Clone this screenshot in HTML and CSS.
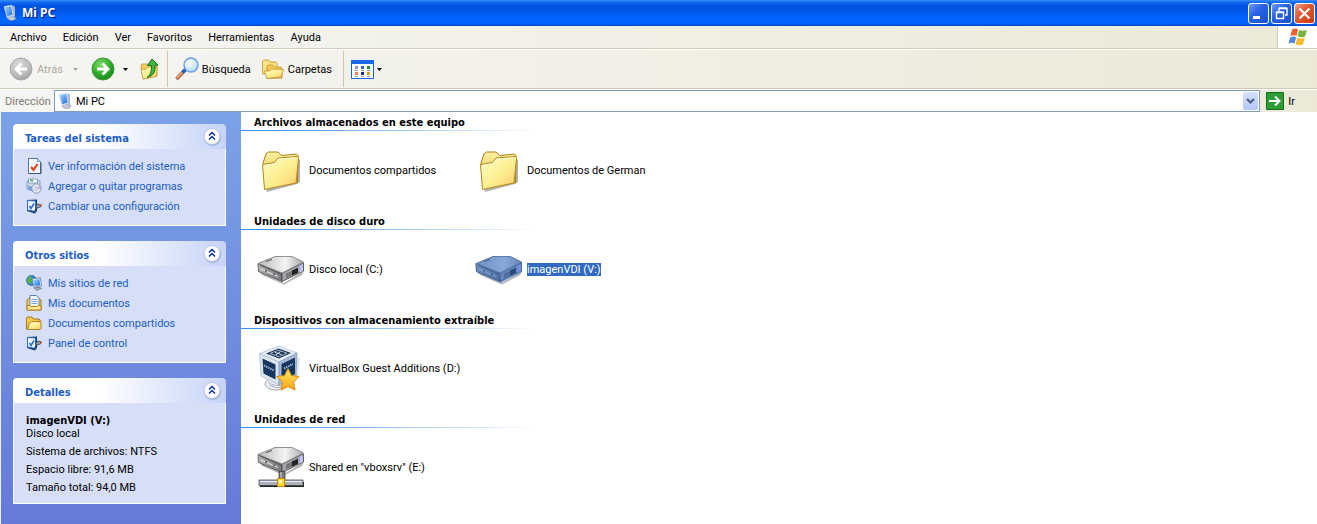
FILE: index.html
```html
<!DOCTYPE html>
<html lang="es">
<head>
<meta charset="utf-8">
<title>Mi PC</title>
<link rel="stylesheet" href="styles.css">
</head>
<body>
<svg class="defs" width="0" height="0" aria-hidden="true">
  <defs>
    <linearGradient id="gFolder" x1="0" y1="0" x2="1" y2="1"><stop offset="0" stop-color="#fffcc0"/><stop offset=".55" stop-color="#fdee90"/><stop offset="1" stop-color="#fbc868"/></linearGradient>
    <linearGradient id="gFolderBack" x1="0" y1="0" x2="0" y2="1"><stop offset="0" stop-color="#fdf3a0"/><stop offset="1" stop-color="#dcae3c"/></linearGradient>
    <linearGradient id="gMetal" x1="0" y1="0" x2="1" y2="0"><stop offset="0" stop-color="#b9b9bb"/><stop offset=".6" stop-color="#f4f4f4"/><stop offset="1" stop-color="#a9a9ad"/></linearGradient>
    <linearGradient id="gSide" x1="0" y1="0" x2="1" y2="0"><stop offset="0" stop-color="#b4b4b6"/><stop offset="1" stop-color="#77777b"/></linearGradient>
    <linearGradient id="gStar" x1="0" y1="0" x2="0" y2="1"><stop offset="0" stop-color="#ffe860"/><stop offset="1" stop-color="#f9a51c"/></linearGradient>
    <radialGradient id="gGreen" cx=".4" cy=".3" r=".8"><stop offset="0" stop-color="#7fdc6c"/><stop offset=".5" stop-color="#36b030"/><stop offset="1" stop-color="#0f7a14"/></radialGradient>
    <radialGradient id="gGray" cx=".4" cy=".3" r=".8"><stop offset="0" stop-color="#dcdcdc"/><stop offset=".6" stop-color="#bcbcbc"/><stop offset="1" stop-color="#999"/></radialGradient>
    <radialGradient id="gLens" cx=".4" cy=".35" r=".7"><stop offset="0" stop-color="#fff"/><stop offset="1" stop-color="#a9d8fb"/></radialGradient>
    <linearGradient id="gScreen" x1="0" y1="0" x2="1" y2="1"><stop offset="0" stop-color="#9fd4ff"/><stop offset="1" stop-color="#1f6fe0"/></linearGradient>

    <symbol id="pc" viewBox="0 0 16 16">
      <path d="M5 13.500l4-2.500 4.500 1.500v2L9 15.800z" fill="#c4cad6" stroke="#7f8898" stroke-width=".6"/>
      <path d="M10.500 .5l2.500 1v10l-2.500 1z" fill="#a9b3c4"/>
      <path d="M2 1.500L10 0l1.500 10.500-6.500 2z" fill="#e8f1fb" stroke="#b4c6e0" stroke-width=".6"/>
      <path d="M2.800 2.200l6.500-1.200 1.200 8.700-5.200 1.500z" fill="url(#gScreen)"/>
    </symbol>
    <symbol id="folder" viewBox="0 0 48 48">
      <path d="M10 46l30-8 3-2V14l-2-1v23l-32 7z" fill="#000" opacity=".3"/>
      <path d="M6 17l3-9L11.500 6h9.500l3.500 3.500 15-1.500 1.500 1.500-.5 27L8 42.500z" fill="url(#gFolderBack)" stroke="#a87f16"/>
      <path d="M5.500 18.500l12-2 3.500-4.500 19.500-1.500 1 2-2.500 24.500L7.500 43.500z" fill="url(#gFolder)" stroke="#b68b1c"/>
      <path d="M7 19.800l11-1.800L21.500 13.300l18-1.500" fill="none" stroke="#fffde0"/>
    </symbol>
    <symbol id="drive" viewBox="0 0 48 32">
      <path d="M3 19l24 11 20-12-2 4-18 9.500L5 22z" fill="#000" opacity=".3"/>
      <path d="M1 10.500L25 20v8.500L1.500 18.500z" fill="url(#gSide)" stroke="#4a4a4d" stroke-width=".8"/>
      <path d="M25 20l21.500-10v8L25 28.500z" fill="#a5a5ac" stroke="#444" stroke-width=".8"/>
      <path d="M1 10.500L18 3.500h17l11.500 5.500L25 20z" fill="url(#gMetal)" stroke="#77777a" stroke-width=".8"/>
      <path d="M9 8.500l6-2M3 12l22 9.500" stroke="#555" stroke-width="1" fill="none"/>
      <path d="M4 16l17 7.500" stroke="#eee" stroke-width="1" fill="none"/>
      <path d="M9 17v2M17 20.500v2" stroke="#222"/>
      <path d="M29 20.500l12-5.500v5l-12 5.500z" fill="#777"/>
      <path d="M35 17.500l6-2.700v5L35 22.500z" fill="#222"/>
      <path d="M42.500 12.500l3.500-1.500v7l-3.500 1.500z" fill="#c3c0f2"/>
    </symbol>
    <symbol id="drive-selected" viewBox="0 0 48 32">
      <use href="#drive"/>
      <path d="M.5 10.500L18 3h17.500L47 9v10L26 30 1 19z" fill="#316ac5" opacity=".55"/>
    </symbol>
    <symbol id="netdrive" viewBox="0 0 48 48">
      <svg width="48" height="32" viewBox="0 0 48 32" y="1"><use href="#drive"/></svg>
      <path d="M22 28l2 1 4-1v9h-6z" fill="#77797d" stroke="#333" stroke-width=".7"/>
      <path d="M24 29v8" stroke="#ddd"/>
      <path d="M3 39h44v5H3z" fill="#222"/>
      <path d="M2 37h44v5.500H2z" fill="#aab2b8" stroke="#44494d" stroke-width=".8"/>
      <path d="M3 38.500h42" stroke="#eef"/>
      <path d="M20.500 35.500h7v8h-7z" fill="#ffd83c" stroke="#c58a00"/>
      <path d="M22 37h3v3h-3z" fill="#fff7a8"/>
    </symbol>
    <symbol id="vbox" viewBox="0 0 48 48">
      <path d="M40 12l3 2-2 20-6 4z" fill="#8fa0c0" opacity=".25"/>
      <ellipse cx="19" cy="40" rx="11" ry="6" fill="#eef1f5" stroke="#a0a6b0"/>
      <path d="M12 41q6 4 14 2M11 38q6 5 15 3" stroke="#aab0b8" fill="none"/>
      <path d="M2.500 9.500L22 2l18 7-18 9z" fill="#e6edf5" stroke="#a4b4c8" stroke-width=".6"/>
      <path d="M2.500 9.500L22 18v23L4 32z" fill="#dbe5f0" stroke="#9dafc4" stroke-width=".6"/>
      <path d="M22 18l18-9-1 23-17 9z" fill="#a9bcd6" stroke="#7a8fac" stroke-width=".6"/>
      <path d="M9 9.500l12.500-5L34 9l-12 5.500z" fill="#1c3355"/>
      <path d="M13 9.500l8.500-3.300L30 9.200l-8 3.500z" fill="none" stroke="#c9d6e6" stroke-width=".8"/>
      <path d="M18 8.500l6.500 2m-5.500.3l4.500-3.300" stroke="#dfe8f2"/>
      <path d="M5.500 14.500L18.500 20.500v15L6.500 29.500z" fill="#163660"/>
      <path d="M24.500 20L38 13.500v16.500l-13.500 7z" fill="#163660"/>
      <path d="M7 21.500l10 5M27 24.500l9-4.500" stroke="#9fb6d2" stroke-width="2" stroke-dasharray="1.500 .8"/>
      <path d="M31 24.500l3.500 7 7.500 1-5.500 5.500 1.500 8-7-3.500-7 3.500 1.500-8-6-5.500 8-1z" fill="url(#gStar)" stroke="#d98a14"/>
    </symbol>
    <symbol id="info" viewBox="0 0 16 16">
      <path d="M2.500.5h9l3 3v12h-12z" fill="#f4f8ff" stroke="#5674a8"/>
      <path d="M3 15.500h12V5" fill="none" stroke="#39507c"/>
      <path d="M11.500.5v3h3" fill="#c8d8f0" stroke="#5674a8" stroke-width=".7"/>
      <path d="M5 9l2.500 3L11.500 6" fill="none" stroke="#e8401c" stroke-width="2.200"/>
    </symbol>
    <symbol id="programs" viewBox="0 0 16 16">
      <path d="M1 3l5-2 8 2v8l-4 3-9-3z" fill="#cfdcec" stroke="#6b87b0" stroke-width=".7"/>
      <path d="M2.500 1h9v4h-9z" fill="#f2f7fc" stroke="#6b87b0" stroke-width=".7"/>
      <path d="M4 2.500h3" stroke="#3fa648" stroke-width="1.500"/>
      <path d="M2 7.500l5 1v5l-5-1.500z" fill="#7fa6e0"/>
      <circle cx="10.500" cy="10.500" r="4.700" fill="#dfe4f2" stroke="#7c8cab" stroke-width=".8"/>
      <path d="M10.500 10.500L14 7.500a4.500 4.500 0 011 3z" fill="#b7a6e8"/>
      <circle cx="10.500" cy="10.500" r="1.300" fill="#fff" stroke="#889" stroke-width=".6"/>
    </symbol>
    <symbol id="config" viewBox="0 0 16 16">
      <path d="M1 2l10-.5V13l-2 2.500L1 13z" fill="#16386e"/>
      <path d="M1.500 2.500l8 .5v10.500l-8-1.500z" fill="#eaf4ff" stroke="#2f6cc8"/>
      <path d="M3.500 8l1.500 2.500L8 5.500" fill="none" stroke="#2a6bd0" stroke-width="1.500"/>
      <path d="M9 9l3-3 2.500.5v2.500l-3.500 1z" fill="#8b97aa" stroke="#2c3a50" stroke-width=".7"/>
      <path d="M11 10l-4 5" stroke="#333" stroke-width="1"/>
      <path d="M14 6.500h2v2h-2z" fill="#c85828"/>
    </symbol>
    <symbol id="network" viewBox="0 0 16 16">
      <circle cx="5.500" cy="5.500" r="5" fill="#3b86d8" stroke="#1c5a9c" stroke-width=".7"/>
      <path d="M2 3q2-2.500 4-2l-1 3 1.500 2L4 9 1 7z" fill="#58b83c"/>
      <path d="M8 13l5-1 2.500 1.500L11 15.500z" fill="#9ea8ba" stroke="#667" stroke-width=".6"/>
      <path d="M6 3.500l8.500-.5 1 8L8 12.500z" fill="#e4eefa" stroke="#57709a" stroke-width=".7"/>
      <path d="M7.200 4.700l6.300-.5.700 6-5.500 1z" fill="url(#gScreen)"/>
    </symbol>
    <symbol id="docs" viewBox="0 0 16 16">
      <path d="M1 15V5l1.500-1.500h11L15 5v10z" fill="#f4cf60" stroke="#a87614"/>
      <path d="M4 .5h6.500L13 3v9H4z" fill="#f8fbff" stroke="#5c82bc"/>
      <path d="M5.500 4.500h6M5.500 6.500h6M5.500 8.500h6" stroke="#7aa4e0"/>
      <path d="M1 10.500h3l1 1h6l1-1h3V15H1z" fill="#fde890" stroke="#b0801c"/>
    </symbol>
    <symbol id="minifolder" viewBox="0 0 16 16">
      <path d="M.5 14V3.500L1.500 2h4.500l1.500 2H13l1 1v9z" fill="#f2c850" stroke="#a87614"/>
      <path d="M1.500 14.500l2-6.500 2-1.500h9.500v7l-1 1z" fill="url(#gFolder)" stroke="#b0801c"/>
    </symbol>
    <symbol id="back" viewBox="0 0 24 24">
      <circle cx="12" cy="12" r="11" fill="url(#gGray)" stroke="#aaa"/>
      <path d="M18 12H8M12.500 6.500L7 12l5.500 5.500" fill="none" stroke="#fff" stroke-width="2.800"/>
    </symbol>
    <symbol id="forward" viewBox="0 0 24 24">
      <circle cx="12" cy="12" r="11" fill="url(#gGreen)" stroke="#3e9c3a"/>
      <path d="M6 12h10M11.500 6.500L17 12l-5.500 5.500" fill="none" stroke="#fff" stroke-width="2.800"/>
    </symbol>
    <symbol id="up" viewBox="0 0 24 24">
      <path d="M3 10l1-3h5l2 1 8-1v12L5 22z" fill="#f3cf62" stroke="#c09a30" stroke-width=".8"/>
      <path d="M3 12.500l5-.5 2-2 9.500.5-1.500 9L5 22z" fill="url(#gFolder)" stroke="#c49a2c" stroke-width=".8"/>
      <path d="M9 20.500q5-3 4.500-12H9.500L14 2l6 6-3 .5Q18.500 18 9 20.500z" fill="#3fb83c" stroke="#14701c"/>
    </symbol>
    <symbol id="search" viewBox="0 0 24 24">
      <path d="M10 13l-8.500 9" stroke="#a8603c" stroke-width="3.600"/>
      <path d="M9.500 13L2 21" stroke="#f0a880" stroke-width="1.800"/>
      <path d="M11 12l-3.500 3.500" stroke="#2c5bb0" stroke-width="3.500"/>
      <circle cx="16" cy="8" r="7" fill="url(#gLens)" stroke="#6f9be4" stroke-width="1.300"/>
    </symbol>
    <symbol id="folders" viewBox="0 0 24 24">
      <path d="M1.500 17V4.500L3 3h4.500L9 5h6l1 1.500V16z" fill="#fbe284" stroke="#c49628" stroke-width=".8"/>
      <path d="M6 21.500V10L7.500 8h4l2 2h6.500l1 2v9z" fill="#f3cc5c" stroke="#b88a1c" stroke-width=".8"/>
      <path d="M6 21.500l-2.500-7.500h5l2-2 12 .5-2.500 7.500z" fill="url(#gFolder)" stroke="#c0922a" stroke-width=".8"/>
    </symbol>
    <symbol id="views" viewBox="0 0 23 19">
      <path d="M.5.5h22v18H.5z" fill="#fff" stroke="#1660d8"/>
      <path d="M0 0h23v4H0z" fill="#1a68e8"/>
      <path d="M4 6h3v3H4z" fill="#8c94b8"/><path d="M10 6h3v3h-3z" fill="#3a5cc8"/><path d="M16 6h3v3h-3z" fill="#209428"/>
      <path d="M4 12h3v3H4z" fill="#f08058"/><path d="M10 12h3v3h-3z" fill="#10309c"/><path d="M16 12h3v3h-3z" fill="#d0a020"/>
      <path d="M4 10.500h3m3 0h3m3 0h3M4 16.500h3m3 0h3m3 0h3" stroke="#999"/>
    </symbol>
    <symbol id="flag" viewBox="0 0 20 20">
      <path d="M4 2.500q3.500-2 6 0L8.500 9Q6 7.500 2.500 9z" fill="#ee6030"/>
      <path d="M11 3q3.500 1.500 8 0L17 9.500q-3.500 1.500-7.300-.2z" fill="#74b43c"/>
      <path d="M2.200 10.200q3.500-1.500 6 0l-1.700 6.500Q4 15 .5 16.500z" fill="#5088dc"/>
      <path d="M9.300 10.700q3.500 1.500 7.500 0L15 17.500q-3.500 1.500-7.500-.3z" fill="#f6bc2c"/>
    </symbol>
    <symbol id="chevrons" viewBox="0 0 20 20">
      <circle cx="10.500" cy="10.500" r="8.500" fill="#6f86b8" opacity=".5"/>
      <circle cx="10" cy="9.500" r="8" fill="#fff" stroke="#b8c4e4"/>
      <path d="M7 8.500l3-3 3 3M7 12.500l3-3 3 3" fill="none" stroke="#0c3190" stroke-width="1.500"/>
    </symbol>
    <symbol id="caret" viewBox="0 0 5 3"><path d="M0 0h5L2.500 3z" fill="currentColor"/></symbol>
  </defs>
</svg>

<div class="window">
  <header class="titlebar">
    <svg class="icon16"><use href="#pc"/></svg>
    <h1 class="title">Mi PC</h1>
    <div class="controls">
      <button class="control" aria-label="Minimizar"><svg viewBox="0 0 19 19"><path d="M4 12h7v3H4z" fill="#fff"/></svg></button>
      <button class="control" aria-label="Restaurar"><svg viewBox="0 0 19 19"><path d="M7 7V4.500h8V11h-2M7 4h8M4.500 8.500h7v6h-7zM4 8h8" fill="none" stroke="#fff" stroke-width="1.400"/></svg></button>
      <button class="control close" aria-label="Cerrar"><svg viewBox="0 0 19 19"><path d="M4.500 4.500l10 10M14.500 4.500l-10 10" stroke="#fff" stroke-width="2.200"/></svg></button>
    </div>
  </header>

  <nav class="menubar" aria-label="Menú">
    <div class="menus">
      <button>Archivo</button><button>Edición</button><button>Ver</button><button>Favoritos</button><button>Herramientas</button><button>Ayuda</button>
    </div>
    <div class="brand"><svg class="flag"><use href="#flag"/></svg></div>
  </nav>

  <div class="toolbar" role="toolbar" aria-label="Botones estándar">
    <button class="tool back" disabled><svg class="icon24"><use href="#back"/></svg>Atrás<svg class="caret"><use href="#caret"/></svg></button>
    <button class="tool forward" aria-label="Adelante"><svg class="icon24"><use href="#forward"/></svg><svg class="caret"><use href="#caret"/></svg></button>
    <button class="tool up" aria-label="Arriba"><svg class="icon24"><use href="#up"/></svg></button>
    <span class="separator"></span>
    <button class="tool search"><svg class="icon24"><use href="#search"/></svg>Búsqueda</button>
    <button class="tool folders"><svg class="icon24"><use href="#folders"/></svg>Carpetas</button>
    <span class="separator"></span>
    <button class="tool views" aria-label="Vistas"><svg class="iconviews"><use href="#views"/></svg><svg class="caret"><use href="#caret"/></svg></button>
  </div>

  <form class="addressbar">
    <label for="address">Dirección</label>
    <div class="combo">
      <svg class="icon16"><use href="#pc"/></svg>
      <input id="address" type="text" value="Mi PC">
      <button type="button" class="drop" aria-label="Mostrar direcciones"><svg viewBox="0 0 15 18"><path d="M4 7l3.500 3.500L11 7" fill="none" stroke="#4d6185" stroke-width="2.200"/></svg></button>
    </div>
    <button type="button" class="go"><svg viewBox="0 0 18 18"><path d="M.5.5h17v17H.5z" fill="#2c9c34" stroke="#14701c"/><path d="M3 9h10M9 4.500L13.500 9 9 13.500" fill="none" stroke="#fff" stroke-width="2"/></svg>Ir</button>
  </form>

  <div class="content">
    <aside class="sidebar">
      <section class="panel">
        <div class="panel-head"><h2>Tareas del sistema</h2><button aria-label="Contraer Tareas del sistema"><svg><use href="#chevrons"/></svg></button></div>
        <ul class="links">
          <li><svg class="icon16"><use href="#info"/></svg><a href="#">Ver información del sistema</a></li>
          <li><svg class="icon16"><use href="#programs"/></svg><a href="#">Agregar o quitar programas</a></li>
          <li><svg class="icon16"><use href="#config"/></svg><a href="#">Cambiar una configuración</a></li>
        </ul>
      </section>
      <section class="panel">
        <div class="panel-head"><h2>Otros sitios</h2><button aria-label="Contraer Otros sitios"><svg><use href="#chevrons"/></svg></button></div>
        <ul class="links">
          <li><svg class="icon16"><use href="#network"/></svg><a href="#">Mis sitios de red</a></li>
          <li><svg class="icon16"><use href="#docs"/></svg><a href="#">Mis documentos</a></li>
          <li><svg class="icon16"><use href="#minifolder"/></svg><a href="#">Documentos compartidos</a></li>
          <li><svg class="icon16"><use href="#config"/></svg><a href="#">Panel de control</a></li>
        </ul>
      </section>
      <section class="panel">
        <div class="panel-head"><h2>Detalles</h2><button aria-label="Contraer Detalles"><svg><use href="#chevrons"/></svg></button></div>
        <div class="details">
          <p><strong>imagenVDI (V:)</strong><br>Disco local</p>
          <p>Sistema de archivos: NTFS</p>
          <p>Espacio libre: 91,6 MB</p>
          <p>Tamaño total: 94,0 MB</p>
        </div>
      </section>
    </aside>

    <main class="files">
      <section class="group">
        <h2>Archivos almacenados en este equipo</h2>
        <div class="tiles">
          <a href="#" class="tile"><svg class="icon48"><use href="#folder"/></svg><span>Documentos compartidos</span></a>
          <a href="#" class="tile"><svg class="icon48"><use href="#folder"/></svg><span>Documentos de German</span></a>
        </div>
      </section>
      <section class="group">
        <h2>Unidades de disco duro</h2>
        <div class="tiles">
          <a href="#" class="tile"><svg class="icon48"><use href="#drive"/></svg><span>Disco local (C:)</span></a>
          <a href="#" class="tile selected"><svg class="icon48"><use href="#drive-selected"/></svg><span>imagenVDI (V:)</span></a>
        </div>
      </section>
      <section class="group">
        <h2>Dispositivos con almacenamiento extraíble</h2>
        <div class="tiles">
          <a href="#" class="tile"><svg class="icon48"><use href="#vbox"/></svg><span>VirtualBox Guest Additions (D:)</span></a>
        </div>
      </section>
      <section class="group">
        <h2>Unidades de red</h2>
        <div class="tiles">
          <a href="#" class="tile"><svg class="icon48"><use href="#netdrive"/></svg><span>Shared en "vboxsrv" (E:)</span></a>
        </div>
      </section>
    </main>
  </div>
</div>
</body>
</html>
```

FILE: styles.css
```css
* { box-sizing: border-box; }

body {
  margin: 0;
  background: #fff;
  color: #000;
  font-family: Tahoma, Roboto, "Noto Sans", sans-serif;
  font-size: 11px;
  line-height: 13px;
}

h1, h2, p, ul { margin: 0; padding: 0; }
h2, strong { font-family: Tahoma, "DejaVu Sans Condensed", sans-serif; }
ul { list-style: none; }
a { color: inherit; text-decoration: none; }
svg { display: block; flex: none; }
.defs { position: absolute; }

button, input {
  margin: 0;
  padding: 0;
  border: 0;
  background: none;
  color: inherit;
  font: inherit;
}

.icon16 { width: 16px; height: 16px; }
.icon24 { width: 24px; height: 24px; }
.icon48 { width: 48px; height: 48px; }
.iconviews { width: 23px; height: 19px; }
.caret { width: 5px; height: 3px; }

.window {
  display: flex;
  flex-direction: column;
  min-height: 100vh;
}

.titlebar {
  display: flex;
  align-items: center;
  gap: 4px;
  height: 26px;
  padding: 0 2px;
  background: linear-gradient(#3a8cf8 0, #0a62f0 3px, #0053e1 6px, #0058ea 12px, #0066ff 19px, #0066ff 23px, #0048c8 26px);
  color: #fff;
}

.title {
  flex: 1;
  font-family: "Noto Sans", sans-serif;
  font-size: 12px;
  line-height: 18px;
  text-shadow: 1px 1px 1px #0a1883;
}

.controls { display: flex; gap: 2px; }

.control {
  width: 21px;
  height: 21px;
  border: 1px solid #fff;
  border-radius: 3px;
  background: linear-gradient(135deg, #6f9df5, #2a62e4 40%, #1a4fd0);
}
.close { background: linear-gradient(135deg, #f0a088, #e25a34 40%, #c83a10); }

.menubar {
  display: flex;
  height: 23px;
  border-bottom: 1px solid #d0ccb8;
  background: linear-gradient(90deg, #f5f5f4, #ece9d8);
}
.menus { display: flex; flex: 1; gap: 16px; padding-left: 10px; }
.brand {
  display: flex;
  align-items: center;
  justify-content: center;
  width: 40px;
  border-left: 1px solid #d0ccb8;
  background: #fff;
}
.flag { width: 20px; height: 20px; }

.toolbar {
  display: flex;
  align-items: center;
  height: 40px;
  padding-left: 9px;
  border-top: 1px solid #fff;
  border-bottom: 1px solid #cfcab2;
  background: linear-gradient(90deg, #f5f5f4, #ece9d8);
}
.tool { display: flex; align-items: center; gap: 4px; }
.back { gap: 4px; color: #aca899; }
.back .caret { margin-left: 6px; }
.forward { gap: 8px; margin-left: 13px; }
.up { margin-left: 10px; }
.search, .folders { gap: 3px; }
.folders { margin-left: 10px; }
.views { gap: 3px; }
.separator {
  align-self: stretch;
  width: 1px;
  margin: 1px 7px 1px 5px;
  background: #d0c8a8;
}
.folders + .separator { margin-left: 11px; }

.addressbar {
  display: flex;
  align-items: center;
  gap: 3px;
  height: 23px;
  padding: 0 22px 0 5px;
  border-top: 1px solid #fff;
  background: linear-gradient(90deg, #f5f5f4, #ece9d8);
}
.addressbar label { color: #7d7b70; }
.combo {
  display: flex;
  flex: 1;
  align-items: center;
  gap: 3px;
  height: 22px;
  padding: 1px 1px 1px 2px;
  border: 1px solid #7f9db9;
  background: #fff;
}
.combo input { flex: 1; min-width: 0; outline: 0; }
.drop {
  width: 15px;
  height: 18px;
  border-radius: 2px;
  background: linear-gradient(#d4e0fd, #b3c8f8);
}
.go { display: flex; align-items: center; gap: 4px; padding-left: 3px; }
.go svg { width: 18px; height: 18px; }

.content { display: flex; flex: 1; }

.sidebar {
  display: flex;
  flex-direction: column;
  gap: 15px;
  width: 241px;
  padding: 12px 15px 12px 12px;
  border-left: 1px solid #f0f0ec;
  background: linear-gradient(#7ba2e7, #667ad8);
}

.panel-head {
  display: flex;
  align-items: center;
  height: 25px;
  padding: 0 4px 0 12px;
  border-radius: 4px 4px 0 0;
  background: linear-gradient(90deg, #fff 40%, #c6d3f7);
  color: #215dc6;
}
.panel-head h2 { flex: 1; padding-top: 3px; font-size: 11px; line-height: 13px; }
.panel-head svg { width: 20px; height: 20px; }

.links, .details {
  border: 1px solid #fff;
  border-top: 0;
  background: #d6dff7;
}
.links { padding: 7px 12px 9px; }
.links li { display: flex; align-items: center; gap: 6px; height: 20px; }
.links a { color: #215dc6; }

.details { padding: 11px 12px 9px; }
.details p { padding-bottom: 5px; line-height: 13px; }
.details p:last-child { padding-bottom: 0; }

.files { flex: 1; background: #fff; }
.group { min-height: 99px; }
.group h2 {
  padding: 4px 13px 1px;
  font-size: 11px;
  line-height: 13px;
  border-bottom: 1px solid;
  border-image: linear-gradient(90deg, #3a8ff2 0, #3a8ff2 20px, #fff 300px) 1;
}
.tiles { display: flex; flex-wrap: wrap; padding: 15px 16px 0; }
.tile { display: flex; align-items: center; gap: 4px; width: 218px; height: 48px; white-space: nowrap; }
.selected span { background: #316ac5; color: #fff; }
```
